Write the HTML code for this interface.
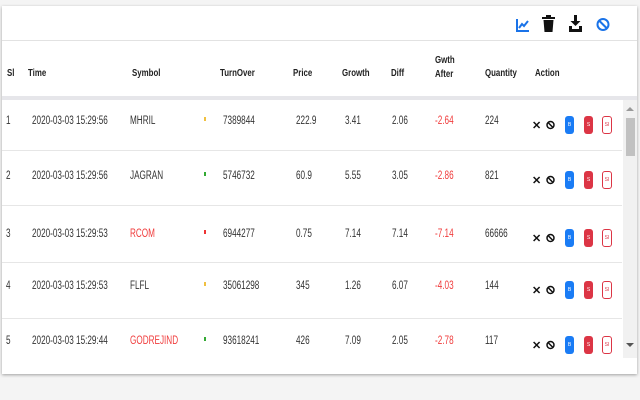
<!DOCTYPE html>
<html><head><style>
body{margin:0;width:640px;height:400px;background:#f4f4f4;font-family:"Liberation Sans",sans-serif;font-size:11.5px;color:#333;position:relative;overflow:hidden}
.pop{position:absolute;left:2px;top:6px;width:635px;height:368px;background:#fff;box-shadow:0 1px 3px rgba(0,0,0,.35)}
.tb{position:absolute;left:0;top:0;width:635px;height:34px;border-bottom:1px solid #e2e2e2}
.hd{position:absolute;left:0;top:35px;width:635px;height:55px;border-bottom:4px solid #e6e6ea}
.t{position:absolute;white-space:nowrap;transform:scaleX(.71);transform-origin:0 0}
.h{font-weight:bold;font-size:10.5px;color:#222;transform:scaleX(.75)}
.red{color:#f03c3c}
.btn{position:absolute;width:9px;height:18px;border-radius:3px;font-size:5px;color:#fff;text-align:center;line-height:18px}
.sb{position:absolute;left:621px;top:94px;width:14px;height:258px;background:#f1f1f1}
</style></head><body>
<div class="pop">
<div class="tb">
<svg style="position:absolute;left:514px;top:12px" width="14" height="14" viewBox="0 0 14 14"><path d="M1 1V13H13" stroke="#1a73e8" stroke-width="2" fill="none"/><path d="M3 10L6 6L8 8L12 3" stroke="#1a73e8" stroke-width="2" fill="none"/></svg>
<svg style="position:absolute;left:540px;top:9px" width="13" height="17" viewBox="0 0 13 17"><rect x="0" y="2" width="13" height="2" fill="#111"/><rect x="4" y="0" width="5" height="2" fill="#111"/><path d="M1.5 5H11.5L10.5 17H2.5Z" fill="#111"/></svg>
<svg style="position:absolute;left:567px;top:9px" width="13" height="17" viewBox="0 0 13 17"><rect x="5" y="0" width="3" height="7" fill="#111"/><path d="M1.5 6H11.5L6.5 11Z" fill="#111"/><path d="M0 11H3V14H10V11H13V17H0Z" fill="#111"/></svg>
<svg style="position:absolute;left:594px;top:11px" width="14" height="15" viewBox="0 0 14 15"><circle cx="7" cy="7.5" r="5.5" stroke="#1a73e8" stroke-width="2" fill="none"/><path d="M3 3.5L11 11.5" stroke="#1a73e8" stroke-width="2"/></svg>
</div>
<div class="hd"></div>
<div class="t h" style="left:5px;top:61px">Sl</div>
<div class="t h" style="left:26px;top:61px">Time</div>
<div class="t h" style="left:130px;top:61px">Symbol</div>
<div class="t h" style="left:218px;top:61px">TurnOver</div>
<div class="t h" style="left:291px;top:61px">Price</div>
<div class="t h" style="left:340px;top:61px">Growth</div>
<div class="t h" style="left:389px;top:61px">Diff</div>
<div class="t h" style="left:433px;top:47px;line-height:14px">Gwth<br>After</div>
<div class="t h" style="left:483px;top:61px">Quantity</div>
<div class="t h" style="left:533px;top:61px">Action</div>
<div class="sb"><div style="position:absolute;left:3px;top:18px;width:9px;height:38px;background:#c1c1c1"></div><div style="position:absolute;left:3px;top:7px;border:4px solid transparent;border-bottom-color:#999;border-top:0"></div><div style="position:absolute;left:3px;top:243px;border:4px solid transparent;border-top-color:#555;border-bottom:0"></div></div>
</div>
<div id="rows"></div>
<script>
var d=[[1,"15:29:56","MHRIL","7389844","222.9","3.41","2.06","-2.64","224",121,0,"#f0c040"],
[2,"15:29:56","JAGRAN","5746732","60.9","5.55","3.05","-2.86","821",176,0,"#3a3"],
[3,"15:29:53","RCOM","6944277","0.75","7.14","7.14","-7.14","66666",234,1,"#e33"],
[4,"15:29:53","FLFL","35061298","345","1.26","6.07","-4.03","144",286,0,"#f0c040"],
[5,"15:29:44","GODREJIND","93618241","426","7.09","2.05","-2.78","117",341,1,"#3a3"]];
var h="";var seps=[150,205,262,318];
seps.forEach(function(y){h+='<div style="position:absolute;left:2px;top:'+y+'px;width:620px;height:1px;background:#e6e6e6"></div>'});
d.forEach(function(r){var y=r[9]-6;
h+='<div class="t" style="left:6px;top:'+y+'px">'+r[0]+'</div>';
h+='<div class="t" style="left:32px;top:'+y+'px">2020-03-03 '+r[1]+'</div>';
h+='<div class="t'+(r[10]?' red':'')+'" style="left:130px;top:'+y+'px">'+r[2]+'</div>';
h+='<div style="position:absolute;left:204px;top:'+(y+2)+'px;width:2px;height:4px;background:'+r[11]+'"></div>';
h+='<div class="t" style="left:223px;top:'+y+'px">'+r[3]+'</div>';
h+='<div class="t" style="left:296px;top:'+y+'px">'+r[4]+'</div>';
h+='<div class="t" style="left:345px;top:'+y+'px">'+r[5]+'</div>';
h+='<div class="t" style="left:392px;top:'+y+'px">'+r[6]+'</div>';
h+='<div class="t red" style="left:435px;top:'+y+'px">'+r[7]+'</div>';
h+='<div class="t" style="left:485px;top:'+y+'px">'+r[8]+'</div>';
var c=r[9]+4;
h+='<div style="position:absolute;left:532px;top:'+(c-6)+'px;font-weight:bold;font-size:11px;color:#111">✕</div>';
h+='<svg style="position:absolute;left:546px;top:'+(c-5)+'px" width="9" height="10" viewBox="0 0 9 10"><circle cx="4.5" cy="5" r="3.5" stroke="#111" stroke-width="1.5" fill="none"/><path d="M2 2.5L7 7.5" stroke="#111" stroke-width="1.5"/></svg>';
h+='<div class="btn" style="left:565px;top:'+(c-9)+'px;background:#1a7cf5">B</div>';
h+='<div class="btn" style="left:584px;top:'+(c-9)+'px;background:#dc3545">S</div>';
h+='<div class="btn" style="left:602px;top:'+(c-9)+'px;border:1px solid #dc3545;color:#dc3545;background:#fff;width:8px;height:16px;line-height:16px">SI</div>';
});
document.getElementById("rows").innerHTML=h;
</script>
</body></html>
